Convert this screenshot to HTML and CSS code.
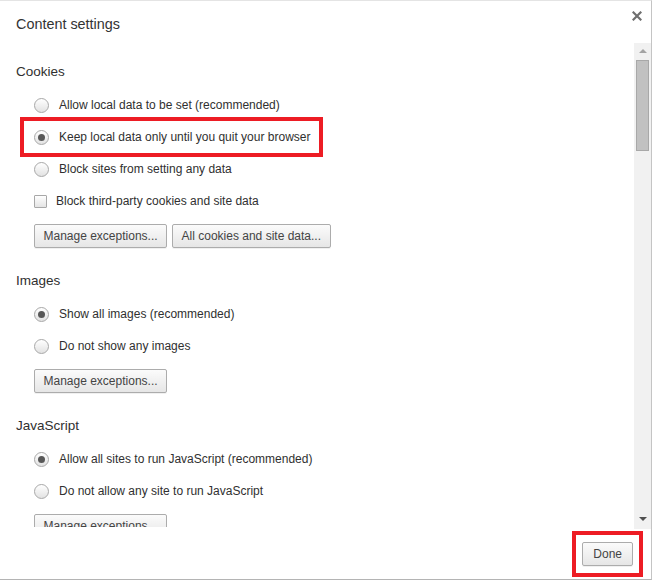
FILE: index.html
```html
<!DOCTYPE html>
<html>
<head>
<meta charset="utf-8">
<link rel="stylesheet" href="styles.css">
</head>
<body>
<div class="page">
  <div class="dialog">
    <div class="header">
      <div class="title">Content settings</div>
      <svg class="close" width="10" height="10" viewBox="0 0 10 10"><path d="M1.5 1.5 L8.5 8.5 M8.5 1.5 L1.5 8.5" stroke="#6f6f6f" stroke-width="2.2" stroke-linecap="square"/></svg>
    </div>
    <div class="main">
      <div class="viewport">
        <div class="content">
          <section class="section">
            <h3 class="sec-title">Cookies</h3>
            <div class="row"><span class="radio"></span><span class="label">Allow local data to be set (recommended)</span></div>
            <div class="row"><span class="radio checked"></span><span class="label">Keep local data only until you quit your browser</span></div>
            <div class="row"><span class="radio"></span><span class="label">Block sites from setting any data</span></div>
            <div class="row"><span class="checkbox"></span><span class="label">Block third-party cookies and site data</span></div>
            <div class="buttons"><button class="btn">Manage exceptions...</button><button class="btn">All cookies and site data...</button></div>
          </section>
          <section class="section">
            <h3 class="sec-title">Images</h3>
            <div class="row"><span class="radio checked"></span><span class="label">Show all images (recommended)</span></div>
            <div class="row"><span class="radio"></span><span class="label">Do not show any images</span></div>
            <div class="buttons"><button class="btn">Manage exceptions...</button></div>
          </section>
          <section class="section">
            <h3 class="sec-title">JavaScript</h3>
            <div class="row"><span class="radio checked"></span><span class="label">Allow all sites to run JavaScript (recommended)</span></div>
            <div class="row"><span class="radio"></span><span class="label">Do not allow any site to run JavaScript</span></div>
            <div class="buttons"><button class="btn">Manage exceptions...</button></div>
          </section>
        </div>
      </div>
      <div class="scrollbar">
        <div class="sb-btn"><span class="arrow-up"></span></div>
        <div class="thumb"></div>
        <div class="sb-fill"></div>
        <div class="sb-btn down"><span class="arrow-down"></span></div>
      </div>
    </div>
    <div class="footer">
      <button class="btn done">Done</button>
    </div>
  </div>
  <div class="mark mark-cookie"></div>
  <div class="mark mark-done"></div>
</div>
</body>
</html>
```
FILE: styles.css
```css
html, body {
  margin: 0;
  padding: 0;
  background: #ffffff;
}
body {
  font-family: "Liberation Sans", Arial, sans-serif;
  color: #333333;
}
.page {
  position: relative;
  width: 653px;
  height: 581px;
}
.dialog {
  width: 651px;
  background: #ffffff;
  border-top: 1px solid #e4e4e4;
  border-right: 1px solid #c4c4c4;
  border-bottom: 1px solid #b4b4b4;
}
.header {
  height: 42px;
  box-sizing: border-box;
  padding: 13px 9px 0 16px;
  display: flex;
  justify-content: space-between;
  align-items: flex-start;
}
.title {
  font-size: 14.4px;
  line-height: 20px;
  color: #333333;
}
.close {
  margin-top: -3px;
}
.main {
  display: flex;
  align-items: flex-start;
  height: 486px;
}
.viewport {
  flex: 1;
  height: 484px;
  overflow: hidden;
}
.content {
  padding: 19px 0 0 16px;
}
.section + .section {
  margin-top: 23px;
}
.sec-title {
  margin: 0 0 7px 0;
  font-size: 13.5px;
  font-weight: normal;
  line-height: 20px;
  color: #303030;
}
.row {
  height: 32px;
  display: flex;
  align-items: center;
  padding-left: 18px;
  font-size: 12px;
  color: #303030;
}
.radio {
  width: 13px;
  height: 13px;
  border: 1px solid #a8a8a8;
  border-radius: 50%;
  background: linear-gradient(#ffffff, #e2e2e2);
  margin-right: 10px;
  display: flex;
  align-items: center;
  justify-content: center;
  flex: none;
}
.radio.checked::after {
  content: "";
  width: 7px;
  height: 7px;
  border-radius: 50%;
  background: #585858;
}
.checkbox {
  width: 11px;
  height: 11px;
  border: 1px solid #a8a8a8;
  border-radius: 1px;
  background: linear-gradient(#ffffff, #e4e4e4);
  margin-right: 9px;
  flex: none;
}
.buttons {
  margin-top: 7px;
  padding-left: 18px;
  display: flex;
  gap: 5px;
}
.btn {
  font-family: "Liberation Sans", Arial, sans-serif;
  font-size: 12px;
  color: #444444;
  height: 24px;
  padding: 0 8.5px;
  border: 1px solid #acacac;
  border-radius: 2px;
  background: linear-gradient(#fbfbfb, #e6e6e6);
  box-shadow: 0 1px 0 rgba(0,0,0,0.06);
  margin: 0;
}
.btn.done {
  padding: 0 10px;
}
.scrollbar {
  width: 17px;
  height: 486px;
  background: #f1f1f1;
  display: flex;
  flex-direction: column;
  align-items: center;
}
.sb-btn {
  height: 17px;
  width: 17px;
  display: flex;
  align-items: center;
  justify-content: center;
  flex: none;
}
.sb-btn.down {
  align-items: flex-start;
  padding-top: 5px;
  box-sizing: border-box;
}
.arrow-up {
  width: 0;
  height: 0;
  border-left: 4px solid transparent;
  border-right: 4px solid transparent;
  border-bottom: 4px solid #a3a3a3;
  margin-top: -1px;
}
.arrow-down {
  width: 0;
  height: 0;
  border-left: 4px solid transparent;
  border-right: 4px solid transparent;
  border-top: 4px solid #505050;
}
.thumb {
  width: 11px;
  height: 89px;
  background: #c1c1c1;
  border: 1px solid #a8a8a8;
  flex: none;
}
.sb-fill {
  flex: 1;
}
.footer {
  height: 50px;
  box-sizing: border-box;
  padding: 13px 18px 0 0;
  display: flex;
  justify-content: flex-end;
  align-items: flex-start;
}
.mark {
  position: absolute;
  border: 4px solid #ed1c24;
  box-sizing: border-box;
}
.mark-cookie {
  left: 20px;
  top: 117px;
  width: 303px;
  height: 40px;
}
.mark-done {
  left: 572px;
  top: 531px;
  width: 71px;
  height: 46px;
}
```
